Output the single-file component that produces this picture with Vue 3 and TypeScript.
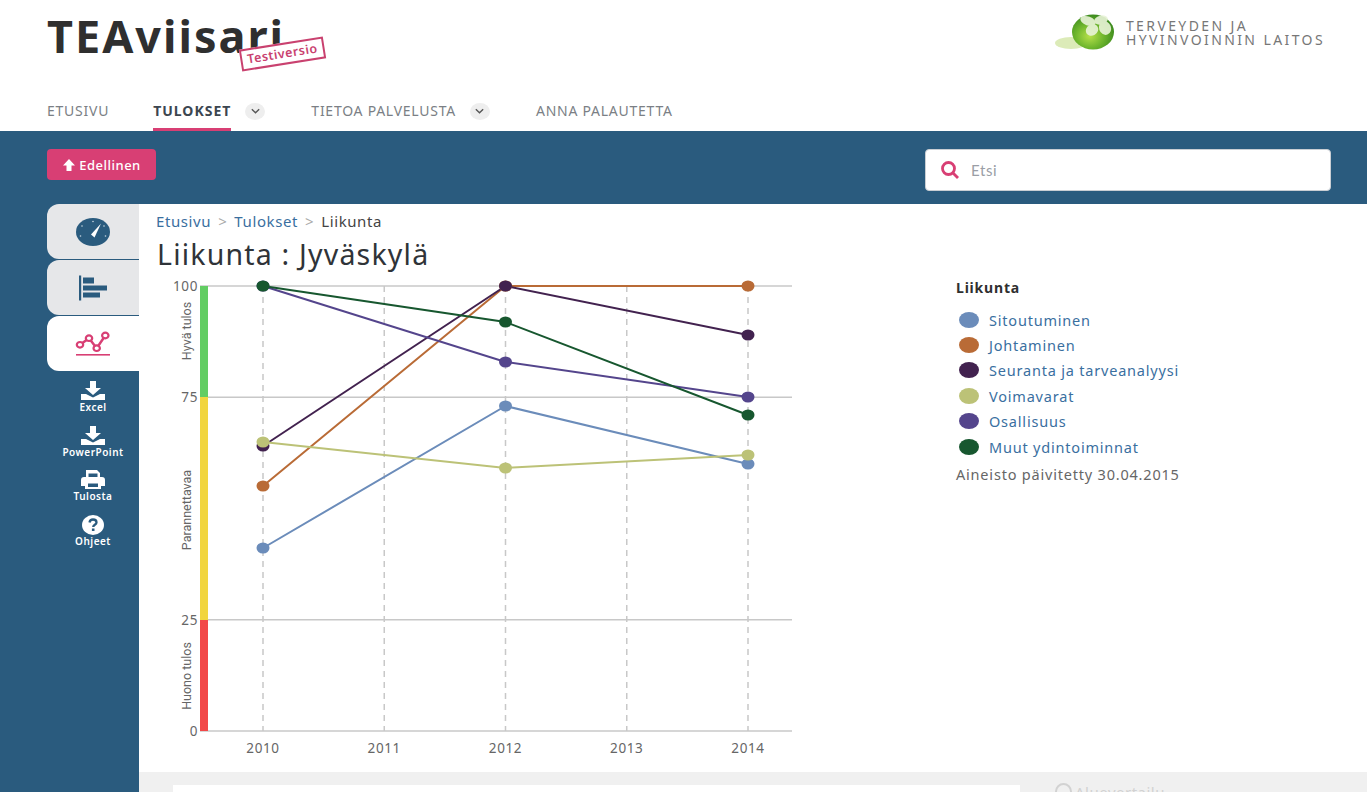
<template>
  <div class="page">
    <header class="site-header">
      <div class="brand-row">
        <div class="brand">
          <span class="brand__name">TEAviisari</span>
          <span class="brand__stamp">Testiversio</span>
        </div>
        <div class="thl">
          <svg class="thl__logo" viewBox="0 0 60 40" aria-hidden="true">
            <defs>
              <radialGradient id="ball" cx="0.42" cy="0.62" r="0.62">
                <stop offset="0" stop-color="#b5e04a" />
                <stop offset="0.55" stop-color="#6db52c" />
                <stop offset="1" stop-color="#3c8a1e" />
              </radialGradient>
            </defs>
            <ellipse cx="16" cy="30" rx="16" ry="6" fill="#dcebb8" />
            <ellipse cx="38" cy="19" rx="21" ry="17.500" fill="url(#ball)" />
            <g fill="#e9f4d8" opacity="0.9">
              <ellipse cx="33" cy="8" rx="8" ry="4.500" transform="rotate(20 33 8)" />
              <ellipse cx="46" cy="7" rx="7" ry="4.500" transform="rotate(-15 46 7)" />
              <ellipse cx="37" cy="17" rx="6.500" ry="5.500" transform="rotate(-30 37 17)" />
              <ellipse cx="50" cy="15" rx="6" ry="7" transform="rotate(-20 50 15)" />
            </g>
          </svg>
          <div class="thl__name">TERVEYDEN JA<br />HYVINVOINNIN LAITOS</div>
        </div>
      </div>
      <nav class="main-nav">
        <template v-for="item in navItems" :key="item.label">
          <a class="main-nav__item" :class="{ 'main-nav__item--active': item.active, 'main-nav__item--menu': item.menu }">{{ item.label }}</a>
          <span v-if="item.menu" class="main-nav__toggle">
            <svg viewBox="0 0 12 8" aria-hidden="true"><path d="M2 2l4 4 4-4" /></svg>
          </span>
        </template>
      </nav>
    </header>

    <div class="toolbar">
      <button class="back-btn">
        <svg viewBox="0 0 14 14" aria-hidden="true"><path d="M7 1l6 6.500H9.500V13h-5V7.500H1z" /></svg>
        Edellinen
      </button>
      <div class="search">
        <svg viewBox="0 0 20 20" aria-hidden="true">
          <circle cx="8.500" cy="8.500" r="6" />
          <path d="M13 13l5 5" />
        </svg>
        <span>Etsi</span>
      </div>
    </div>

    <div class="body">
      <aside class="side">
        <div class="side__tab">
          <svg class="tab-icon" viewBox="0 0 36 30" aria-hidden="true">
            <ellipse cx="18" cy="15" rx="17" ry="14" fill="#2a5b7e" />
            <path d="M16 17.500L26 6.500 19.500 20.500z" fill="#fff" />
            <g fill="#c9d6e0">
              <circle cx="18" cy="4.500" r="0.800" />
              <circle cx="7" cy="9" r="0.800" />
              <circle cx="29" cy="9" r="0.800" />
              <circle cx="5.500" cy="19" r="0.800" />
              <circle cx="30.500" cy="19" r="0.800" />
            </g>
          </svg>
        </div>
        <div class="side__tab">
          <svg class="tab-icon" viewBox="0 0 36 30" aria-hidden="true">
            <g fill="#2a5b7e">
              <rect x="4" y="2.500" width="2.200" height="25" />
              <rect x="8" y="4.500" width="11" height="6" />
              <rect x="8" y="12.500" width="24" height="5" />
              <rect x="8" y="19.500" width="17" height="5" />
            </g>
          </svg>
        </div>
        <div class="side__tab side__tab--active">
          <svg class="tab-icon" viewBox="0 0 36 30" aria-hidden="true">
            <path d="M5 15.800l9-6.600 7.700 10 8.600-12.700" fill="none" stroke="#d83f74" stroke-width="2.500" />
            <g fill="#fff" stroke="#d83f74" stroke-width="2.200">
              <ellipse cx="5" cy="15.800" rx="3.200" ry="2.800" />
              <ellipse cx="14" cy="9.200" rx="3.200" ry="2.800" />
              <ellipse cx="21.700" cy="19.200" rx="3.200" ry="2.800" />
              <ellipse cx="30.300" cy="6.500" rx="3.200" ry="2.800" />
            </g>
            <rect x="1" y="25" width="34" height="1.600" fill="#d83f74" />
          </svg>
        </div>
        <a class="side__action">
          <svg viewBox="0 0 26 20" aria-hidden="true">
            <path d="M10 0h6v7h5l-8 7-8-7h5z" />
            <path d="M1 13h5l7 3.500 7-3.500h5v6H1z" />
          </svg>
          Excel
        </a>
        <a class="side__action">
          <svg viewBox="0 0 26 20" aria-hidden="true">
            <path d="M10 0h6v7h5l-8 7-8-7h5z" />
            <path d="M1 13h5l7 3.500 7-3.500h5v6H1z" />
          </svg>
          PowerPoint
        </a>
        <a class="side__action">
          <svg viewBox="0 0 26 20" aria-hidden="true">
            <path d="M6 7V0h11l3 3v4h2a3 3 0 0 1 3 3v6h-4v3H5v-3H1v-6a3 3 0 0 1 3-3zm2.500 0h9V3.500h-9zM8 13.500v3.500h10v-3.500z" fill-rule="evenodd" />
          </svg>
          Tulosta
        </a>
        <a class="side__action">
          <svg viewBox="0 0 22 20" aria-hidden="true">
            <ellipse cx="11" cy="10" rx="11" ry="10" fill="#fff" />
            <path d="M7.500 7.500C7.800 5.500 9.300 4.500 11 4.500c2 0 3.500 1.200 3.500 3 0 2.300-3.300 2.300-3.300 4.500" fill="none" stroke="#2a5b7e" stroke-width="2.300" />
            <rect x="9.900" y="13.500" width="2.600" height="2.500" fill="#2a5b7e" />
          </svg>
          Ohjeet
        </a>
      </aside>

      <main class="content">
        <div class="breadcrumb">
          <a>Etusivu</a><i>&gt;</i><a>Tulokset</a><i>&gt;</i><span>Liikunta</span>
        </div>
        <h1 class="title">Liikunta : Jyväskylä</h1>
        <div class="chart-row">
          <svg class="chart" viewBox="0 0 800 490" role="img" aria-label="Liikunta">
            <g class="grid-y">
              <line v-for="t in yTicks" :key="t" x1="61" x2="653" :y1="yOf(t)" :y2="yOf(t)" />
            </g>
            <g class="grid-x">
              <line v-for="y in years" :key="y" :x1="xOf(y)" :x2="xOf(y)" y1="10" y2="455" />
            </g>
            <rect x="61" y="10" width="8" height="111" fill="#62cd63" />
            <rect x="61" y="121" width="8" height="223" fill="#f1d53f" />
            <rect x="61" y="344" width="8" height="111" fill="#f24848" />
            <text v-for="t in yTicks" :key="t" class="tick" x="59" :y="yOf(t) + 5" text-anchor="end">{{ t }}</text>
            <text v-for="y in years" :key="y" class="tick" :x="xOf(y)" y="477" text-anchor="middle">{{ y }}</text>
            <text class="band" transform="translate(52 55) rotate(-90)" text-anchor="middle">Hyvä tulos</text>
            <text class="band" transform="translate(52 234) rotate(-90)" text-anchor="middle">Parannettavaa</text>
            <text class="band" transform="translate(52 400) rotate(-90)" text-anchor="middle">Huono tulos</text>
            <g v-for="s in series" :key="s.name">
              <polyline :points="linePoints(s)" fill="none" :stroke="s.color" stroke-width="2" />
            </g>
            <g v-for="s in series" :key="s.name + '-dots'">
              <ellipse
                v-for="(v, i) in s.values"
                :key="i"
                :cx="xOf(dataYears[i])"
                :cy="v"
                rx="6.500"
                ry="5.500"
                :fill="s.color"
              />
            </g>
          </svg>
          <div class="legend">
            <div class="legend__title">Liikunta</div>
            <ul class="legend__list">
              <li v-for="s in series" :key="s.name">
                <span class="legend__dot" :style="{ background: s.color }"></span>
                <a>{{ s.name }}</a>
              </li>
            </ul>
            <div class="legend__note">Aineisto päivitetty 30.04.2015</div>
          </div>
        </div>
        <div class="lower">
          <div class="lower__card"></div>
          <div class="lower__side"><span class="lower__ring"></span>Aluevertailu</div>
        </div>
      </main>
    </div>
  </div>
</template>

<script setup lang="ts">
interface Series {
  name: string;
  color: string;
  values: number[];
}

const navItems = [
  { label: "ETUSIVU" },
  { label: "TULOKSET", active: true, menu: true },
  { label: "TIETOA PALVELUSTA", menu: true },
  { label: "ANNA PALAUTETTA" },
];

const years = [2010, 2011, 2012, 2013, 2014];
const dataYears = [2010, 2012, 2014];
const yTicks = [100, 75, 25, 0];

// values are y coordinates inside the svg, read off the picture
const series: Series[] = [
  { name: "Sitoutuminen", color: "#6b8cba", values: [272, 130, 188] },
  { name: "Johtaminen", color: "#b96b36", values: [210, 10, 10] },
  { name: "Seuranta ja tarveanalyysi", color: "#42224f", values: [170, 10, 59] },
  { name: "Voimavarat", color: "#bcc277", values: [166, 192, 179] },
  { name: "Osallisuus", color: "#54458c", values: [10, 86, 121] },
  { name: "Muut ydintoiminnat", color: "#17572f", values: [10, 46, 139] },
];

function xOf(year: number) {
  return 124 + (year - 2010) * 121.25;
}

function yOf(tick: number) {
  return 455 - tick * 4.45;
}

function linePoints(s: Series) {
  return s.values.map((v, i) => `${xOf(dataYears[i])},${v}`).join(" ");
}
</script>

<style scoped>
.page {
  height: 792px;
  overflow: hidden;
  background: #2a5b7e;
  font-family: "Noto Sans", "Open Sans", sans-serif;
  color: #333;
}

.site-header {
  height: 131px;
  background: #fff;
  padding: 0 42px 0 47px;
  box-sizing: border-box;
  display: flex;
  flex-direction: column;
  justify-content: space-between;
}

.brand-row {
  display: flex;
  justify-content: space-between;
  align-items: flex-start;
}

.brand {
  position: relative;
  margin-top: 6px;
}

.brand__name {
  font-size: 45px;
  line-height: 60px;
  font-weight: 700;
  letter-spacing: 2px;
  color: #2f2f2f;
}

.brand__stamp {
  position: absolute;
  left: 193px;
  top: 37px;
  padding: 0 5px;
  border: 2px solid #c9416f;
  background: #fff;
  color: #c9416f;
  font-size: 12.500px;
  line-height: 18px;
  font-weight: 600;
  letter-spacing: 0.5px;
  white-space: nowrap;
  transform: rotate(-9deg);
}

.thl {
  display: flex;
  align-items: center;
  gap: 11px;
  margin-top: 13px;
}

.thl__logo {
  width: 60px;
  height: 40px;
}

.thl__name {
  font-size: 14px;
  line-height: 14.500px;
  letter-spacing: 2.4px;
  color: #777;
}

.main-nav {
  display: flex;
  align-items: center;
  height: 40px;
}

.main-nav__item {
  height: 40px;
  line-height: 40px;
  box-sizing: border-box;
  font-size: 14px;
  letter-spacing: 0.75px;
  color: #7b7f85;
  margin-right: 44px;
  white-space: nowrap;
}

.main-nav__item--active {
  font-weight: 700;
  letter-spacing: 1px;
  color: #3c4650;
  border-bottom: 3px solid #d83f74;
}

.main-nav__item--menu {
  margin-right: 14px;
}

.main-nav__toggle {
  width: 20px;
  height: 17px;
  margin-right: 46px;
  border-radius: 50%;
  background: #eee;
  display: flex;
  align-items: center;
  justify-content: center;
}

.main-nav__toggle svg {
  width: 11px;
  height: 8px;
  fill: none;
  stroke: #555;
  stroke-width: 1.500;
}

.toolbar {
  height: 73px;
  padding: 18px 36px 0 47px;
  box-sizing: border-box;
  display: flex;
  justify-content: space-between;
  align-items: flex-start;
}

.back-btn {
  width: 109px;
  height: 31px;
  padding: 0;
  border: 0;
  border-radius: 4px;
  background: #d83f74;
  color: #fff;
  font-family: inherit;
  font-size: 13px;
  font-weight: 500;
  letter-spacing: 0.5px;
  display: flex;
  align-items: center;
  justify-content: center;
  gap: 3px;
}

.back-btn svg {
  width: 14px;
  height: 14px;
  fill: #fff;
}

.search {
  width: 406px;
  height: 42px;
  padding-left: 14px;
  box-sizing: border-box;
  border: 1px solid #c9ced3;
  border-radius: 4px;
  background: #fff;
  display: flex;
  align-items: center;
  gap: 11px;
  font-family: "Lato", sans-serif;
  font-size: 15px;
  letter-spacing: 0.6px;
  color: #9a9ea6;
}

.search svg {
  width: 20px;
  height: 20px;
  fill: none;
  stroke: #d83f74;
  stroke-width: 2.800;
}

.body {
  display: grid;
  grid-template-columns: 139px 1fr;
  height: 588px;
}

.side {
  padding-left: 47px;
  display: flex;
  flex-direction: column;
  color: #fff;
}

.side__tab {
  height: 55px;
  margin-bottom: 1px;
  border-radius: 12px 0 0 12px;
  background: #e6e7e9;
  display: flex;
  align-items: center;
  justify-content: center;
}

.side__tab--active {
  background: #fff;
  margin-bottom: 10px;
}

.tab-icon {
  width: 36px;
  height: 30px;
}

.side__action {
  height: 44.500px;
  display: flex;
  flex-direction: column;
  align-items: center;
  justify-content: flex-start;
  font-size: 10px;
  line-height: 13px;
  font-weight: 600;
  letter-spacing: 0.5px;
  white-space: nowrap;
}

.side__action svg {
  width: 26px;
  height: 20px;
  flex: none;
  fill: #fff;
}

.content {
  background: #fff;
  min-width: 0;
}

.breadcrumb {
  padding: 7px 0 0 17px;
  font-size: 15px;
  line-height: 20px;
  letter-spacing: 0.6px;
  color: #444;
}

.breadcrumb a {
  color: #3a6f9f;
}

.breadcrumb i {
  margin: 0 7px;
  font-style: normal;
  color: #aaa;
}

.title {
  margin: 0 0 4px;
  padding: 5px 0 0 18px;
  font-size: 28.500px;
  line-height: 36px;
  font-weight: 400;
  letter-spacing: 1.2px;
  color: #2f3338;
}

.chart-row {
  display: flex;
  align-items: flex-start;
  height: 496px;
}

.chart {
  width: 800px;
  height: 490px;
  flex: none;
}

.grid-y line {
  stroke: #c8c8c8;
  stroke-width: 1.500;
}

.grid-x line {
  stroke: #c8c8c8;
  stroke-width: 1.500;
  stroke-dasharray: 6 5;
}

.tick {
  font-size: 13.500px;
  letter-spacing: 0.6px;
  fill: #666;
}

.band {
  font-family: "Roboto", sans-serif;
  font-size: 12.500px;
  fill: #666;
}

.legend {
  margin: 3px 0 0 17px;
  font-size: 14.500px;
  letter-spacing: 0.8px;
}

.legend__title {
  font-weight: 700;
  font-size: 14px;
  line-height: 18px;
  color: #2f2f2f;
}

.legend__list {
  list-style: none;
  margin: 10px 0 0;
  padding: 0;
}

.legend__list li {
  height: 25.400px;
  padding-left: 3px;
  display: flex;
  align-items: center;
  gap: 10px;
}

.legend__list a {
  color: #3a6f9f;
}

.legend__dot {
  width: 20px;
  height: 16px;
  border-radius: 50%;
}

.legend__note {
  margin-top: 5px;
  font-size: 14.500px;
  line-height: 20px;
  color: #666;
}

.lower {
  height: 40px;
  background: #f0f0f0;
  padding: 13px 0 0 34px;
  box-sizing: border-box;
  display: flex;
  align-items: flex-start;
  gap: 35px;
}

.lower__card {
  width: 847px;
  height: 40px;
  background: #fff;
}

.lower__side {
  margin-top: -2px;
  display: flex;
  align-items: center;
  gap: 3px;
  font-size: 15px;
  line-height: 16px;
  letter-spacing: 0.5px;
  color: #d2d2d2;
}

.lower__ring {
  width: 13px;
  height: 13px;
  border: 2px solid #d2d2d2;
  border-radius: 50%;
}
</style>

<style>
html,
body {
  margin: 0;
  background: #fff;
}
</style>
